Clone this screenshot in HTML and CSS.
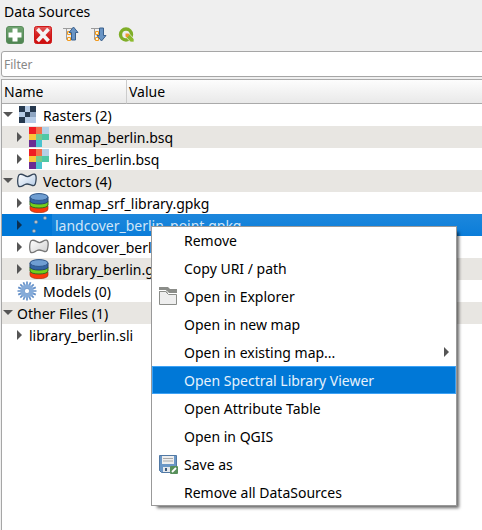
FILE: index.html
```
<!DOCTYPE html>
<html lang="en">
<head>
<meta charset="utf-8">
<title>Data Sources</title>
<link rel="stylesheet" href="styles.css">
</head>
<body>
<svg class="defs" aria-hidden="true">
  <defs>
    <linearGradient id="green" x1="0" y1="0" x2="0" y2="1"><stop offset="0" stop-color="#72a673"/><stop offset="1" stop-color="#4d8350"/></linearGradient>
    <linearGradient id="red" x1="0" y1="0" x2="0" y2="1"><stop offset="0" stop-color="#e35b5b"/><stop offset=".5" stop-color="#d42020"/><stop offset="1" stop-color="#cc0c0c"/></linearGradient>
    <linearGradient id="poly" x1="0" y1="0" x2="1" y2="1"><stop offset="0" stop-color="#fff"/><stop offset="1" stop-color="#b4cbe6"/></linearGradient>
    <linearGradient id="polygrey" x1="0" y1="0" x2="1" y2="1"><stop offset="0" stop-color="#fff"/><stop offset="1" stop-color="#cfcfcf"/></linearGradient>
    <symbol id="down" viewBox="0 0 10 6"><path d="M0 0h10L5 5z" fill="#555"/></symbol>
    <symbol id="right" viewBox="0 0 6 10"><path d="M0 0v10l5-5z" fill="#555"/></symbol>
    <symbol id="bands" viewBox="0 0 20 20">
      <path d="M0 0h7v7H0z" fill="#ef1c24"/><path d="M7 0h6v7H7z" fill="#f3714b"/><path d="M13 0h7v7h-7z" fill="#b5d0e6"/>
      <path d="M0 7h7v6H0z" fill="#fbc43c"/><path d="M7 7h6v6H7z" fill="#76ca8c"/><path d="M13 7h7v6h-7z" fill="#4fc8a6"/>
      <path d="M0 13h7v7H0z" fill="#6b2c92"/><path d="M7 13h6v7H7z" fill="#4ac3cf"/>
    </symbol>
    <symbol id="db" viewBox="0 0 20 20">
      <path d="M1 13v3c0 5 18 5 18 0v-3z" fill="#fb3a0c" stroke="#a33418" stroke-width=".7"/>
      <path d="M1 8v4c0 4 18 4 18 0V8z" fill="#74cf1b" stroke="#346a22"/>
      <path d="M1 4v4c0 4 18 4 18 0V4z" fill="#3465a4" stroke="#24446f"/>
      <ellipse cx="10" cy="4" rx="9" ry="3.4" fill="#6f9ed2" stroke="#2f5688"/>
    </symbol>
    <symbol id="shape" viewBox="0 0 20 16"><path d="M2.500 1.500C6 0 8 4 11 3.500c3-.5 4-3 6.500-2.300 2.500.8 1.800 4 1.300 7.300-.3 2.500-1 4.500-3.300 4-3-.7-4.500-2.500-7.500-1-2.500 1.300-5 3.500-6.500 1.500C.3 11 .3 3 2.500 1.500z" stroke-width="1.300"/></symbol>
  </defs>
</svg>
<main class="panel">
  <h1 class="title">Data Sources</h1>
  <div class="toolbar">
    <button class="tool" aria-label="Add data source"><svg width="18" height="18" viewBox="0 0 18 18"><rect x=".5" y=".5" width="17" height="17" rx="2.500" fill="url(#green)" stroke="#5a8d5c"/><path d="M6.500 2.500h5v4h4v5h-4v4h-5v-4h-4v-5h4z" fill="#fff"/></svg></button>
    <button class="tool" aria-label="Remove data source"><svg width="18" height="18" viewBox="0 0 18 18"><rect x=".5" y=".5" width="17" height="17" rx="2" fill="url(#red)" stroke="#d01818"/><path d="M3.500 3l11 12m0-12l-11 12" stroke="#f4f4f4" stroke-width="3.800"/></svg></button>
    <button class="tool" aria-label="Collapse tree"><svg width="18" height="18" viewBox="0 0 18 18"><path d="M1 2.500h9M4.500 2v11.500H8M4.500 7H8" fill="none" stroke="#9b9b9b"/><path d="M5.500 5.500h3v3h-3zM5.500 11.500h3v3h-3z" fill="#fff3d0" stroke="#f29a20"/><path d="M11.500 1L16 6.500h-2.500V14h-4V6.500H7z" fill="#6a95c5" stroke="#3b608c"/></svg></button>
    <button class="tool" aria-label="Expand tree"><svg width="18" height="18" viewBox="0 0 18 18"><path d="M1 2.500h13M4.500 2v11.500H8M4.500 7H8" fill="none" stroke="#9b9b9b"/><path d="M5.500 5.500h3v3h-3zM5.500 11.500h3v3h-3z" fill="#fff3d0" stroke="#f29a20"/><path d="M11.500 15L16 9.500h-2.500V2h-4v7.500H7z" fill="#6a95c5" stroke="#3b608c"/></svg></button>
    <button class="tool" aria-label="Synchronize with QGIS"><svg width="18" height="18" viewBox="0 0 18 18"><circle cx="8" cy="8.500" r="5.500" fill="none" stroke="#7fae28" stroke-width="3.400"/><path d="M8 8h3.500l4.500 5v3h-3.500l-4.500-5z" fill="#8dbb2d" stroke="#efefef" stroke-width=".7"/><path d="M7.500 7.500h3l1 1.500-2.500 2.500-1.500-1z" fill="#ef9a32"/></svg></button>
  </div>
  <input class="filter" type="text" placeholder="Filter" aria-label="Filter">
  <table class="tree">
    <thead><tr><th class="name">Name</th><th>Value</th></tr></thead>
    <tbody>
      <tr><td colspan="2"><div class="node"><svg class="arrow" width="10" height="6"><use href="#down"/></svg><svg class="icon" width="20" height="18" viewBox="-2 0 20 18"><path d="M0 0h17v17H0z" fill="#b5cbe6"/><path d="M0 0h6v6H0zM11 0h6v6h-6zM6 6h5v5H6zM0 11h6v6H0z" fill="#26394f"/><path d="M11 6h6v5h-6z" fill="#8fa6c2"/></svg><span class="label">Rasters (2)</span></div></td></tr>
      <tr class="shaded"><td colspan="2"><div class="node child"><svg class="arrow" width="6" height="10"><use href="#right"/></svg><svg class="icon" width="20" height="20"><use href="#bands"/></svg><span class="label">enmap_berlin.bsq</span></div></td></tr>
      <tr><td colspan="2"><div class="node child"><svg class="arrow" width="6" height="10"><use href="#right"/></svg><svg class="icon" width="20" height="20"><use href="#bands"/></svg><span class="label">hires_berlin.bsq</span></div></td></tr>
      <tr class="shaded"><td colspan="2"><div class="node"><svg class="arrow" width="10" height="6"><use href="#down"/></svg><svg class="icon" width="20" height="16" fill="url(#poly)" stroke="#35465a"><use href="#shape"/></svg><span class="label">Vectors (4)</span></div></td></tr>
      <tr><td colspan="2"><div class="node child"><svg class="arrow" width="6" height="10"><use href="#right"/></svg><svg class="icon" width="20" height="20"><use href="#db"/></svg><span class="label">enmap_srf_library.gpkg</span></div></td></tr>
      <tr class="selected"><td colspan="2"><div class="node child"><svg class="arrow" width="6" height="10"><path d="M0 0v10l5-5z" fill="#0b2f50"/></svg><svg class="icon" width="20" height="20" viewBox="0 0 20 20" fill="#b9c5cf" stroke="#6d8498" stroke-width=".6"><circle cx="7" cy="7" r="1.600"/><circle cx="16" cy="3" r="1.600"/><circle cx="5" cy="16" r="1.600"/></svg><span class="label">landcover_berlin_point.gpkg</span></div></td></tr>
      <tr><td colspan="2"><div class="node child"><svg class="arrow" width="6" height="10"><use href="#right"/></svg><svg class="icon" width="20" height="16" fill="url(#polygrey)" stroke="#777"><use href="#shape"/></svg><span class="label">landcover_berlin</span></div></td></tr>
      <tr class="shaded"><td colspan="2"><div class="node child"><svg class="arrow" width="6" height="10"><use href="#right"/></svg><svg class="icon" width="20" height="20"><use href="#db"/></svg><span class="label">library_berlin.gpkg</span></div></td></tr>
      <tr><td colspan="2"><div class="node"><span class="arrow"></span><svg class="icon" width="20" height="20" viewBox="0 0 20 20" fill="none"><path d="M10 .5v19M.5 10h19M3.300 3.300l13.400 13.400M16.700 3.300L3.300 16.700M6.400 1.200l7.200 17.600M13.600 1.200L6.400 18.800M1.200 6.400l17.600 7.200M1.200 13.600l17.600-7.200" stroke="#6490c8" stroke-width="1.700"/><circle cx="10" cy="10" r="4.700" stroke="#85abd9" stroke-width="4"/><circle cx="10" cy="10" r="2.600" fill="#fff" stroke="#6490c8" stroke-width=".7"/></svg><span class="label">Models (0)</span></div></td></tr>
      <tr class="shaded"><td colspan="2"><div class="node"><svg class="arrow" width="10" height="6"><use href="#down"/></svg><span class="label">Other Files (1)</span></div></td></tr>
      <tr><td colspan="2"><div class="node child"><svg class="arrow" width="6" height="10"><use href="#right"/></svg><span class="label">library_berlin.sli</span></div></td></tr>
    </tbody>
  </table>
</main>
<div class="menu" role="menu">
  <button class="item" role="menuitem">Remove</button>
  <button class="item" role="menuitem">Copy URI / path</button>
  <button class="item" role="menuitem"><svg class="glyph" width="18" height="18" viewBox="0 0 18 18"><path d="M0 0h9l2 2h7v4H0z" fill="#8b8d89"/><path d="M0 3.500h7l3 3h8" fill="none" stroke="#fff"/><path d="M.5 4.500h6l3 3h8v10H.5z" fill="#eee" stroke="#8b8d89"/></svg>Open in Explorer</button>
  <button class="item" role="menuitem">Open in new map</button>
  <button class="item" role="menuitem">Open in existing map...<svg class="more" width="6" height="10"><use href="#right"/></svg></button>
  <button class="item active" role="menuitem">Open Spectral Library Viewer</button>
  <button class="item" role="menuitem">Open Attribute Table</button>
  <button class="item" role="menuitem">Open in QGIS</button>
  <button class="item" role="menuitem"><svg class="glyph" width="19" height="19" viewBox="0 0 19 19"><path d="M.5.500h17v17h-15l-2-2z" fill="#6b97c6" stroke="#5279a4"/><path d="M3 1h12v8H3z" fill="#eee"/><path d="M4 3.500h10M4 6h10" stroke="#aaa"/><path d="M4 12h8v5H4z" fill="#e5e8eb"/><path d="M6 13h2v3H6z" fill="#3e5a7b"/><rect x="11" y="11" width="8" height="8" rx="1" fill="#58905b"/><path d="M13 17l4-4" stroke="#fff" stroke-width="1.800"/></svg>Save as</button>
  <button class="item" role="menuitem">Remove all DataSources</button>
</div>
</body>
</html>
```
FILE: styles.css
```
* { box-sizing: border-box; }
body {
  margin: 0;
  min-height: 100vh;
  background: #fff;
  color: #000;
  font: 14px/22px "Noto Sans", "Open Sans", sans-serif;
  overflow: hidden;
}
.defs { position: absolute; width: 0; height: 0; }
button, input { font: inherit; color: inherit; }
.panel {
  display: flex;
  flex-direction: column;
  min-height: 100vh;
  padding-left: 1px;
  background: #efefef;
}
.title {
  margin: 0;
  padding: 1px 3px;
  font-size: 14px;
  font-weight: 400;
}
.toolbar {
  display: flex;
  gap: 10px;
  padding: 2px 5px 7px;
}
.tool {
  display: flex;
  padding: 0;
  border: 0;
  background: none;
}
.filter {
  height: 26px;
  margin: 0 -4px 2px 0;
  padding: 0 2px;
  border: 1px solid #a6a6a6;
  border-radius: 3px;
  background: #fff;
  font-size: 12px;
}
.filter::placeholder { color: #888; opacity: 1; }
.tree {
  width: 100%;
  border-spacing: 0;
  border-left: 1px solid #a6a6a6;
  background: #fff;
  table-layout: fixed;
}
th {
  height: 25px;
  padding: 1px 2px 0;
  border: 1px solid #aaa;
  border-width: 1px 0;
  background: linear-gradient(#fdfdfd, #e9e9e9);
  font-weight: 400;
  text-align: left;
}
.name { width: 125px; border-right-width: 1px; border-right-color: #ccc; }
td { padding: 0; }
.panel::after { content: ""; flex: 1; border-left: 1px solid #a6a6a6; background: #fff; }
.node {
  display: flex;
  align-items: center;
  height: 22px;
  padding-left: 1px;
  white-space: nowrap;
}
.child { padding-left: 15px; }
.label { padding-top: 2px; }
.arrow { flex: none; width: 10px; margin-right: 4px; }
.child .arrow { width: 6px; margin-right: 6px; }
.icon { flex: none; width: 20px; margin-right: 6px; }
.shaded { background: #e8e6e2; }
.selected { background: linear-gradient(90deg, #0078d7 50px, transparent 50px), linear-gradient(#1d87dc, #0b7dd9); color: #d0e6f8; }
.menu {
  position: absolute;
  left: 151px;
  top: 226px;
  display: flex;
  flex-direction: column;
  width: 306px;
  background: #fff;
  outline: 1px solid #999;
  outline-offset: -1px;
  box-shadow: 4px 4px 3px -2px rgba(0, 0, 0, .6);
}
.item {
  position: relative;
  display: flex;
  align-items: center;
  height: 28px;
  margin: 0 1px;
  padding: 2px 6px 0 32px;
  border: 0;
  background: none;
  white-space: nowrap;
}
.active { border: 1px solid #3da2f5; padding-left: 31px; background: #0078d7; color: #e6f2fc; }
.glyph { position: absolute; top: 5px; left: 7px; }
.more { position: absolute; top: 9px; right: 6px; }
```
